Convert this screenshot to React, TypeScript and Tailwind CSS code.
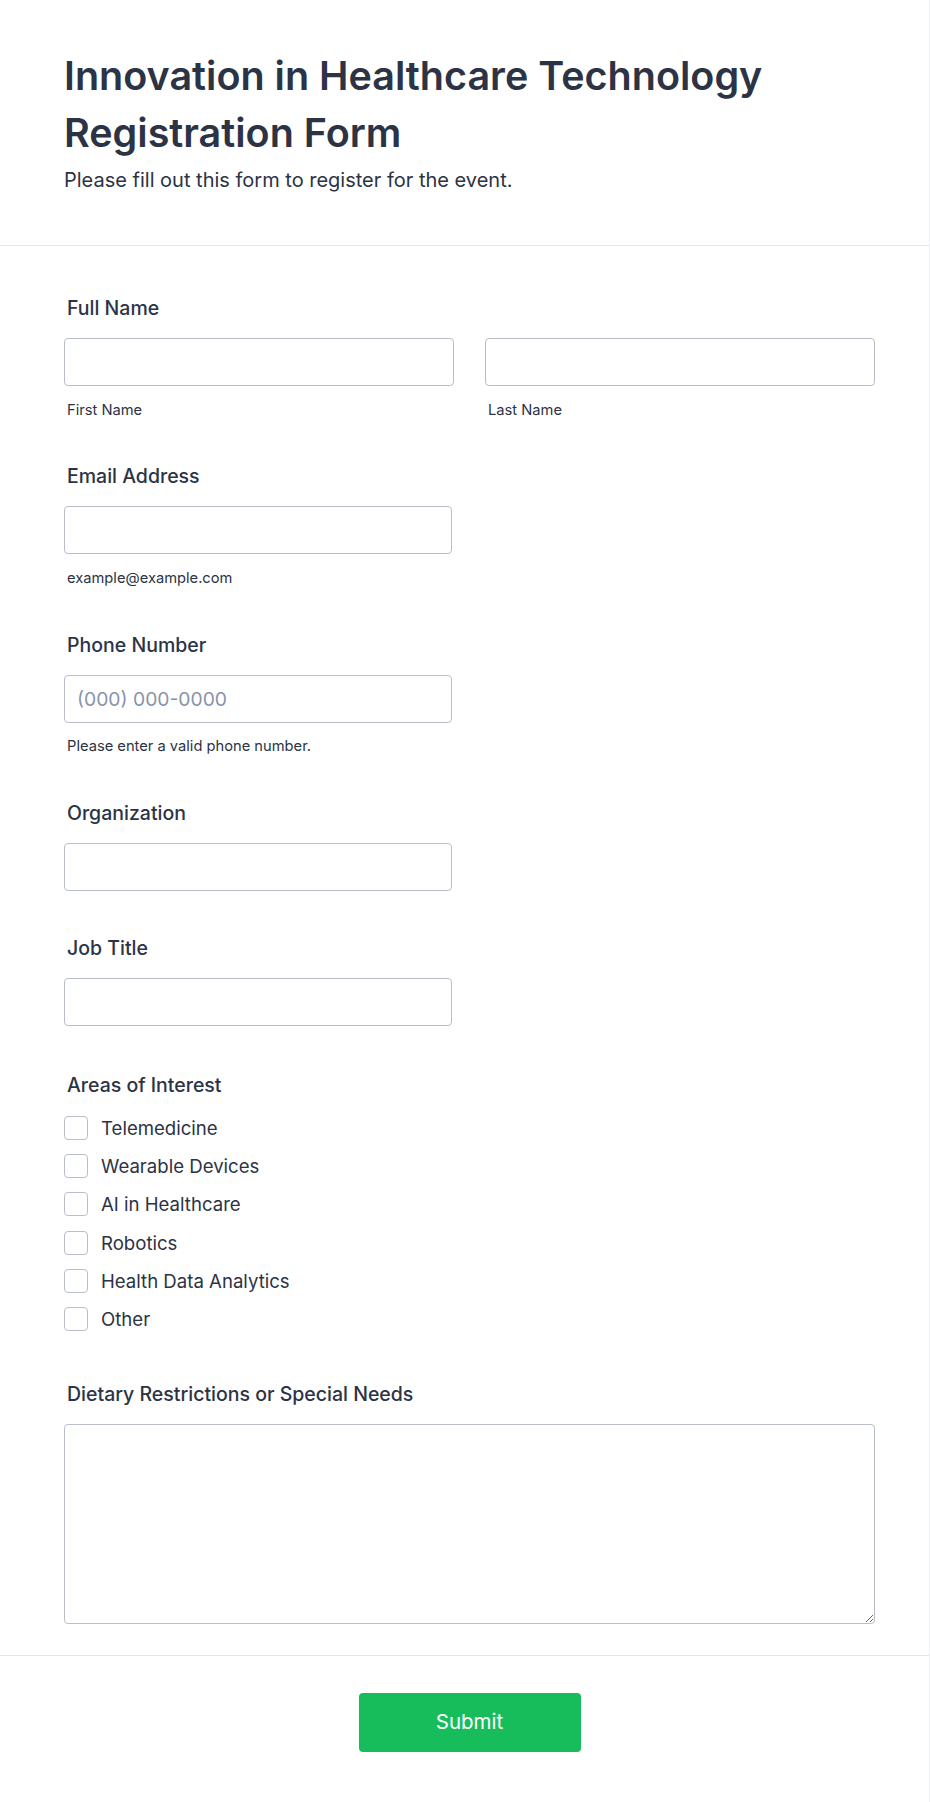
import React from "react";

const font = { fontFamily: "Inter, 'Noto Sans', sans-serif" };

function Label({ children }: { children: React.ReactNode }) {
  return (
    <div className="pl-[3px] text-[19.5px] leading-[30px] font-medium text-[#2c3345]">{children}</div>
  );
}

function Input({ className = "", placeholder }: { className?: string; placeholder?: string }) {
  return (
    <input
      type="text"
      placeholder={placeholder}
      className={
        "block h-[48px] rounded-[4px] border border-[#b8bdc9] bg-white px-[12px] text-[19.3px] text-[#2c3345] placeholder:text-[#8894ab] outline-none " +
        className
      }
    />
  );
}

function Sub({ children }: { children: React.ReactNode }) {
  return <div className="mt-[12.5px] pl-[3px] text-[14.7px] leading-[22px] text-[#2c3345]">{children}</div>;
}

export default function App() {
  const interests = [
    "Telemedicine",
    "Wearable Devices",
    "AI in Healthcare",
    "Robotics",
    "Health Data Analytics",
    "Other",
  ];
  return (
    <div style={font} className="min-h-[1802px] w-[930px] bg-white text-[#2c3345] border-r border-[#eef0f4]">
      <div className="border-b border-[#e3e5e8] pl-[64px] pr-[54px] pt-[48px] pb-[50px]">
        <h1 className="text-[39.5px] leading-[57px] font-semibold text-[#2c3345]">
          Innovation in Healthcare Technology
          <br />
          Registration Form
        </h1>
        <p className="mt-[3px] text-[20px] leading-[30px] text-[#2c3345]">
          Please fill out this form to register for the event.
        </p>
      </div>

      <div className="pl-[64px] pr-[54px] pt-[47px] pb-[31px] flex flex-col">
        <div>
          <Label>Full Name</Label>
          <div className="mt-[15px] grid grid-cols-2 gap-[31px]">
            <div>
              <Input className="w-full" />
              <Sub>First Name</Sub>
            </div>
            <div>
              <Input className="w-full" />
              <Sub>Last Name</Sub>
            </div>
          </div>
        </div>

        <div className="mt-[40.7px]">
          <Label>Email Address</Label>
          <div className="mt-[15px]">
            <Input className="w-[388px]" />
            <Sub>example@example.com</Sub>
          </div>
        </div>

        <div className="mt-[41.2px]">
          <Label>Phone Number</Label>
          <div className="mt-[15px]">
            <Input className="w-[388px]" placeholder="(000) 000-0000" />
            <Sub>Please enter a valid phone number.</Sub>
          </div>
        </div>

        <div className="mt-[40.2px]">
          <Label>Organization</Label>
          <div className="mt-[15px]">
            <Input className="w-[388px]" />
          </div>
        </div>

        <div className="mt-[42.5px]">
          <Label>Job Title</Label>
          <div className="mt-[15px]">
            <Input className="w-[388px]" />
          </div>
        </div>

        <div className="mt-[43.6px]">
          <Label>Areas of Interest</Label>
          <div className="mt-[16.3px] flex flex-col gap-[14.2px]">
            {interests.map((it) => (
              <label key={it} className="flex items-center h-[24px]">
                <span className="block h-[24px] w-[24px] shrink-0 rounded-[4px] border border-[#b8bdc9] bg-white" />
                <span className="ml-[13px] text-[18.6px] leading-[24px] text-[#2c3345]">{it}</span>
              </label>
            ))}
          </div>
        </div>

        <div className="mt-[48.4px]">
          <Label>Dietary Restrictions or Special Needs</Label>
          <div className="mt-[15px]">
            <textarea className="block h-[200px] w-full rounded-[4px] border border-[#b8bdc9] bg-white p-[12px] text-[18px] outline-none" />
          </div>
        </div>
      </div>

      <div className="border-t border-[#e3e5e8] pt-[37px] pb-[50px] pl-[64px] pr-[54px] flex justify-center">
        <button className="h-[59px] w-[222px] rounded-[4px] bg-[#18bd5b] text-[20.5px] font-normal text-white">
          Submit
        </button>
      </div>
    </div>
  );
}
